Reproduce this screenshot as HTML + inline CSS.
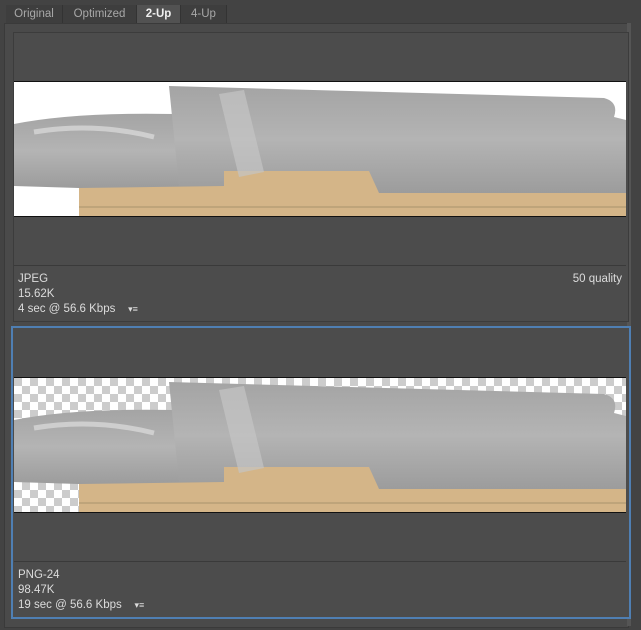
<!DOCTYPE html><html><head><style>
body{margin:0;width:641px;height:630px;background:#434343;font-family:"Liberation Sans",sans-serif;position:relative;overflow:hidden}
.tab{position:absolute;top:5px;height:18px;line-height:18px;font-size:11.5px;color:#a8a8a8;text-align:center;background:#3e3e3e;border-right:1px solid #333}
.main{position:absolute;left:4px;top:23px;width:623px;height:603px;background:#4a4a4a;border:1px solid #3a3a3a}
.panel{position:absolute;left:13px;width:614px;background:#4c4c4c;border:1px solid #3c3c3c}
.img{position:absolute;left:14px;width:612px;height:134px;border-top:1px solid #111;border-bottom:1px solid #111}
.info{position:absolute;left:18px;font-size:11.5px;color:#dcdcdc;line-height:15px}
.sep{position:absolute;left:14px;width:612px;height:1px;background:#3a3a3a}
</style></head><body>
<div class="tab" style="left:6px;width:56px">Original</div>
<div class="tab" style="left:63px;width:73px">Optimized</div>
<div class="tab" style="left:137px;width:43px;background:#525252;color:#f0f0f0;font-weight:bold">2-Up</div>
<div class="tab" style="left:181px;width:45px">4-Up</div>
<div class="main"></div>
<div style="position:absolute;left:627px;top:23px;width:4px;height:603px;background:#555"></div>
<div class="panel" style="top:32px;height:288px"></div>
<div class="panel" style="top:326px;height:289px;left:11px;width:616px;border:2px solid #4f7fb3"></div>
<svg width="0" height="0" style="position:absolute"><defs>
<pattern id="ck" width="16" height="16" patternUnits="userSpaceOnUse"><rect width="16" height="16" fill="#fff"/><rect width="8" height="8" fill="#ccc"/><rect x="8" y="8" width="8" height="8" fill="#ccc"/></pattern>
<linearGradient id="tp" x1="0" y1="0" x2="0" y2="1"><stop offset="0" stop-color="#a4a4a4"/><stop offset=".5" stop-color="#b4b4b4"/><stop offset="1" stop-color="#9c9c9c"/></linearGradient>
<g id="art">
<rect x="65" y="88" width="547" height="46" fill="#d4b588"/>
<line x1="65" y1="125" x2="612" y2="125" stroke="#a8926c" stroke-width="1"/>
<path d="M0 42 Q60 30 160 32 L165 100 L210 104 L65 106 L0 104Z" fill="url(#tp)"/>
<path d="M155 4 L590 16 Q605 20 600 35 L612 38 L612 111 L365 111 L355 89 L210 89 L210 104 L165 104 Z" fill="url(#tp)"/>
<path d="M205 12 L230 8 L250 90 L225 95Z" fill="#c4c4c4" opacity=".7"/>
<path d="M20 50 Q80 40 140 55" stroke="#ddd" stroke-width="5" fill="none" opacity=".7"/>
</g></defs></svg>
<svg class="img" style="top:81px;background:#fff" viewBox="0 0 612 134"><use href="#art"/></svg>
<svg class="img" style="top:377px" viewBox="0 0 612 134"><rect width="612" height="134" fill="url(#ck)"/><use href="#art"/></svg>
<div class="sep" style="top:265px"></div>
<div class="sep" style="top:561px"></div>
<div class="info" style="top:272px">JPEG<br>15.62K<br>4 sec @ 56.6 Kbps &nbsp; &nbsp;<span style="font-size:9px">▾≡</span></div>
<div class="info" style="top:272px;left:auto;right:19px">50 quality</div>
<div class="info" style="top:568px">PNG-24<br>98.47K<br>19 sec @ 56.6 Kbps &nbsp; &nbsp;<span style="font-size:9px">▾≡</span></div>
</body></html>
